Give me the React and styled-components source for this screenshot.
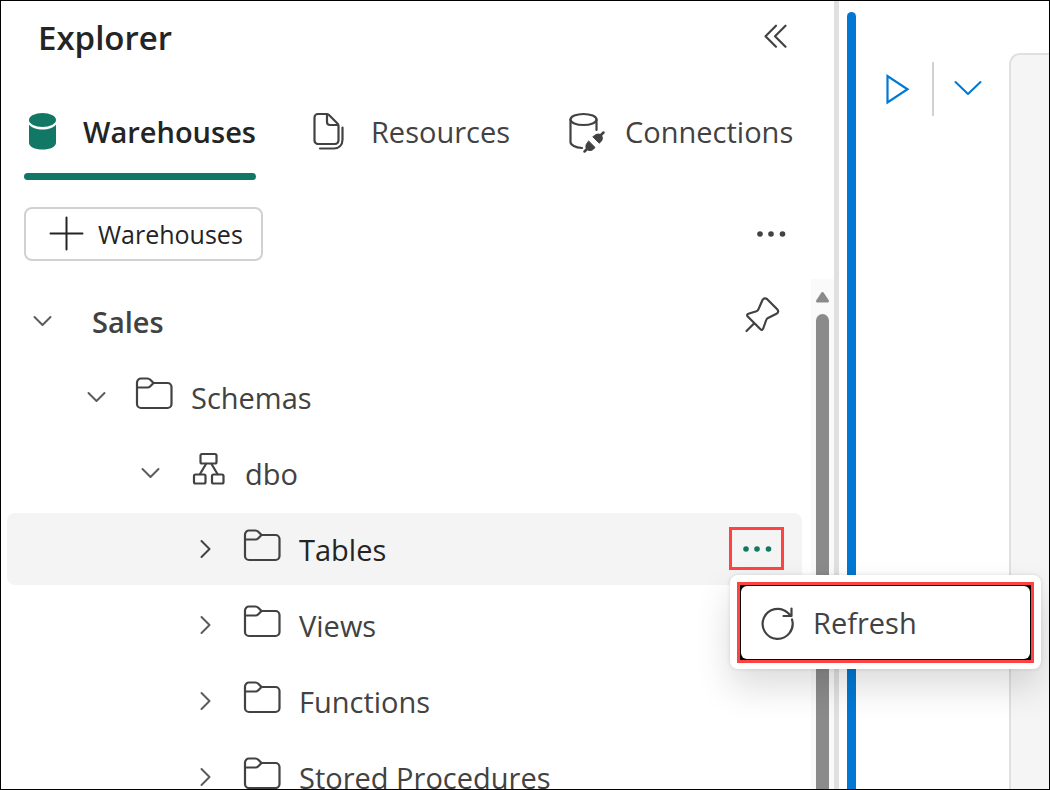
import React from "react";
import styled, { createGlobalStyle, css } from "styled-components";

const color = {
  text: "#242424",
  muted: "#424242",
  green: "#117865",
  blue: "#0078d4",
  line: "#e0e0e0",
  callout: "#ff4343",
};

const GlobalStyle = createGlobalStyle`
  * { box-sizing: border-box; }
  body {
    margin: 0;
    background: #fff;
    color: ${color.muted};
    font-family: "Open Sans", "Noto Sans", sans-serif;
    font-size: 29px;
    line-height: 40px;
  }
  button {
    margin: 0;
    padding: 0;
    border: 0;
    background: none;
    color: inherit;
    font: inherit;
    cursor: pointer;
  }
  svg { display: block; flex: none; overflow: visible; }
`;

const Frame = styled.div`
  display: flex;
  height: 100vh;
  overflow: hidden;
  border: 1px solid #000;
`;

const Sidebar = styled.aside`
  display: flex;
  flex: 1;
  flex-direction: column;
  min-width: 0;
  border-right: 5px solid ${color.line};
`;

const Header = styled.header`
  display: flex;
  align-items: center;
  justify-content: space-between;
  height: 74px;
  padding: 0 38px 0 37px;
`;

const Title = styled.h1`
  margin: 0;
  color: ${color.text};
  font-size: 33px;
  font-weight: 600;
  line-height: 44px;
`;

const IconButton = styled.button`
  display: grid;
  place-items: center;
  width: 40px;
  height: 40px;
`;

const Tabs = styled.div`
  display: flex;
  gap: 56px;
  height: 105px;
  padding-left: 23px;
`;

const Tab = styled.button`
  position: relative;
  display: flex;
  align-items: center;
  gap: 21px;
  padding: 8px 0 0;
  white-space: nowrap;
  ${({ $active }) =>
    $active &&
    css`
      color: ${color.text};
      font-weight: 600;
      &::after {
        content: "";
        position: absolute;
        inset: auto 0 0;
        height: 7px;
        border-radius: 4px;
        background: ${color.green};
      }
    `}
`;

const Toolbar = styled.div`
  display: flex;
  align-items: center;
  justify-content: space-between;
  padding: 27px 43px 18px 23px;
`;

const AddButton = styled.button`
  display: flex;
  align-items: center;
  gap: 14px;
  height: 54px;
  padding: 0 18px 0 24px;
  border: 2px solid #d1d1d1;
  border-radius: 8px;
  color: ${color.text};
  font-size: 25px;
  line-height: 36px;
`;

const Explorer = styled.div`
  display: flex;
  flex: 1;
  min-height: 0;
`;

const Tree = styled.ul`
  display: flex;
  flex: 1;
  flex-direction: column;
  gap: 4px;
  margin: 0;
  padding: 6px 9px 0 6px;
  list-style: none;
`;

const Row = styled.li`
  display: flex;
  flex: none;
  align-items: center;
  height: 72px;
  padding-right: 18px;
  padding-left: ${({ $level }) => 8 + $level * 54}px;
  border-radius: 8px;
  background: ${({ $selected }) => ($selected ? "#f4f4f4" : "transparent")};
`;

const Toggle = styled.button`
  display: grid;
  place-items: center;
  width: 54px;
  height: 40px;
  color: ${({ $selected }) => ($selected ? color.muted : "#5c5c5c")};
`;

const NodeIcon = styled.span`
  margin: 0 17px 8px 11px;
`;

const Label = styled.span`
  flex: 1;
  padding-top: 2px;
  padding-left: ${({ $root }) => ($root ? "23px" : "0")};
  color: ${({ $selected }) => ($selected ? color.text : color.muted)};
  font-weight: ${({ $root }) => ($root ? 600 : 400)};
  white-space: nowrap;
`;

const Actions = styled.div`
  position: relative;
  margin-bottom: 1px;
`;

const MoreButton = styled(IconButton)`
  width: 55px;
  height: 43px;
  border: 3px solid ${color.callout};
  color: ${color.green};
`;

const Menu = styled.div`
  position: absolute;
  top: 48px;
  left: 1px;
  z-index: 10;
  width: 311px;
  padding: 7px 7px 6px;
  border-radius: 8px;
  background: #fff;
  box-shadow: 0 0 4px rgba(0, 0, 0, 0.12), 0 18px 36px rgba(0, 0, 0, 0.14);
`;

const Callout = styled.div`
  padding: 1px;
  border: 3px solid ${color.callout};
  background: #000;
`;

const MenuItem = styled.button`
  display: flex;
  align-items: center;
  gap: 19px;
  width: 100%;
  height: 73px;
  padding: 0 19px;
  border-radius: 6px;
  background: #fff;
  color: ${color.muted};
`;

const Scrollbar = styled.div`
  display: flex;
  flex-direction: column;
  align-items: center;
  gap: 11px;
  width: 23px;
  padding-top: 12px;
  background: #fafafa;
`;

const Thumb = styled.div`
  flex: 1;
  width: 13px;
  border-radius: 7px 7px 0 0;
  background: #8b8b8b;
`;

const Editor = styled.main`
  display: flex;
  flex: 0 0 210px;
  padding-left: 8px;
`;

const ActiveBar = styled.div`
  width: 9px;
  margin-top: 11px;
  border-radius: 5px 5px 0 0;
  background: ${color.blue};
`;

const CellTools = styled.div`
  display: flex;
  align-items: center;
  gap: 14px;
  height: 54px;
  margin: 61px 21px 0 22px;
  color: ${color.blue};
`;

const Separator = styled.div`
  width: 2px;
  height: 54px;
  background: #d1d1d1;
`;

const CodeCell = styled.section`
  flex: 1;
  margin-top: 52px;
  border: 2px solid ${color.line};
  border-width: 2px 0 0 2px;
  border-radius: 11px 0 0 0;
  background: #f5f5f5;
`;

function Icon({ w, h, stroke = 2.2, children }) {
  return (
    <svg
      width={w}
      height={h}
      viewBox={`0 0 ${w} ${h}`}
      fill="none"
      stroke="currentColor"
      strokeWidth={stroke}
      strokeLinecap="round"
      strokeLinejoin="round"
      aria-hidden="true"
    >
      {children}
    </svg>
  );
}

const CollapseIcon = () => (
  <Icon w={24} h={26}>
    <path d="M12 .700 1.500 11.200 12 21.700M21.500.700 11 11.200 21.500 21.700" />
  </Icon>
);

const WarehouseIcon = () => (
  <Icon w={38} h={40}>
    <g fill={color.green} stroke="none">
      <ellipse cx="18.500" cy="8" rx="13.500" ry="7" />
      <path d="M5 12.500C7.500 16 12.500 17.500 18.500 17.500s11-1.500 13.500-5V31c0 3.800-6 6.500-13.500 6.500S5 34.800 5 31Z" />
    </g>
  </Icon>
);

const ResourcesIcon = () => (
  <Icon w={38} h={40}>
    <path d="M6 2h8.500a3.500 3.500 0 0 1 2.500 1l8.500 8.500a3.500 3.500 0 0 1 1 2.500v14.500a3.500 3.500 0 0 1-3.500 3.500H6A3.500 3.500 0 0 1 2.500 28.500V5.500A3.500 3.500 0 0 1 6 2Z" />
    <path d="M15 2.500V10a3 3 0 0 0 3 3h7.500" />
    <path d="M30.500 15.500V27.500c0 5.500-3.500 9-8.500 9H8" />
  </Icon>
);

const ConnectionsIcon = () => (
  <Icon w={38} h={40}>
    <ellipse cx="17.500" cy="7.500" rx="13" ry="5.500" />
    <path d="M4.500 7.500V30c0 3 5 5.500 11.500 6M30.500 7.500V18" />
    <path d="m18.500 39.500 3-3M34.500 23.500l3-3" strokeWidth="2.500" />
    <g fill="currentColor" stroke="currentColor" strokeWidth="1">
      <path d="M22.800 29.200 29 35.400l-1.400 1.600c-2 2-5 2-6.600.400s-1.600-4.600.300-6.600Z" />
      <path d="m27 25 6.200 6.200 1.600-1.400c2-2 2-5 .400-6.600s-4.600-1.600-6.600.300Z" />
    </g>
  </Icon>
);

const PlusIcon = () => (
  <Icon w={34} h={38} stroke={2}>
    <path d="M16.500 2.500v32M.500 18.500h32" />
  </Icon>
);

const MoreIcon = () => (
  <Icon w={30} h={8}>
    <g fill="currentColor" stroke="none">
      <circle cx="4" cy="4" r="2.800" />
      <circle cx="15" cy="4" r="2.800" />
      <circle cx="26.500" cy="4" r="2.800" />
    </g>
  </Icon>
);

const ChevronIcon = ({ open }) => (
  <Icon w={20} h={20} stroke={2}>
    <path d={open ? "m2.500 6 8 8 8-8" : "m7.500 2 8 8-8 8"} />
  </Icon>
);

const FolderIcon = () => (
  <Icon w={40} h={34}>
    <path d="M3 12V6.500a4 4 0 0 1 4-4h6.500c1.200 0 2 .400 2.800 1.200L19.500 7h14a4 4 0 0 1 4 4v17a4 4 0 0 1-4 4H7a4 4 0 0 1-4-4Z" />
    <path d="M3 11.500h10.500c1.200 0 2-.400 2.800-1.200L19.500 7" />
  </Icon>
);

const SchemaIcon = () => (
  <Icon w={40} h={34}>
    <rect x="12.500" y="2" width="16" height="9.500" rx="1.500" />
    <rect x="6" y="22.500" width="11.500" height="9" rx="1.500" />
    <rect x="24" y="22.500" width="11.500" height="9" rx="1.500" />
    <path d="m18 12-6 10M23.500 12l6 10" />
  </Icon>
);

const PinIcon = () => (
  <Icon w={40} h={40}>
    <path d="M2.500 30 10 22.500M18.500-1c1-1.800 3-2.200 4.700-.800l10 10c1.500 1.600 1.300 3.600-.700 4.600l-8.500 4.200c-1 .500-1.500 1-1.800 2l-3 8.500c-.500 1.500-1.700 1.800-2.700.800L3.700 15.500c-1-1-.700-2.200.700-2.700l8-2.600c1-.400 1.600-.900 2-1.800Z" />
  </Icon>
);

const RefreshIcon = () => (
  <Icon w={34} h={38}>
    <path d="M32 15.500A15 15 0 1 1 28 9l3 3M31.500 4.500V12H23.500" />
  </Icon>
);

const RunIcon = () => (
  <Icon w={26} h={34}>
    <path d="M2.500 4v26.500l20-13.250Z" strokeLinejoin="miter" />
  </Icon>
);

const WideChevronIcon = () => (
  <Icon w={28} h={16} stroke={2}>
    <path d="m1.500 1 12.500 12 12.500-12" />
  </Icon>
);

const UpArrow = () => (
  <svg width="15" height="12" viewBox="0 0 15 12" aria-hidden="true">
    <path
      d="M7.500 2.500 12.500 10h-10Z"
      fill="#8b8b8b"
      stroke="#8b8b8b"
      strokeWidth="3"
      strokeLinejoin="round"
    />
  </svg>
);

const tabs = [
  { name: "Warehouses", icon: <WarehouseIcon />, active: true },
  { name: "Resources", icon: <ResourcesIcon /> },
  { name: "Connections", icon: <ConnectionsIcon /> },
];

const nodes = [
  { name: "Sales", level: 0, open: true, pinned: true },
  { name: "Schemas", level: 1, open: true, icon: <FolderIcon /> },
  { name: "dbo", level: 2, open: true, icon: <SchemaIcon /> },
  { name: "Tables", level: 3, icon: <FolderIcon />, selected: true },
  { name: "Views", level: 3, icon: <FolderIcon /> },
  { name: "Functions", level: 3, icon: <FolderIcon /> },
  { name: "Stored Procedures", level: 3, icon: <FolderIcon /> },
];

function TreeRow({ node }) {
  return (
    <Row $level={node.level} $selected={node.selected}>
      <Toggle
        aria-label={`Toggle ${node.name}`}
        aria-expanded={!!node.open}
        $selected={node.selected}
      >
        <ChevronIcon open={node.open} />
      </Toggle>
      {node.icon && <NodeIcon>{node.icon}</NodeIcon>}
      <Label $root={node.level === 0} $selected={node.selected}>
        {node.name}
      </Label>
      {node.pinned && (
        <IconButton aria-label="Pin">
          <PinIcon />
        </IconButton>
      )}
      {node.selected && (
        <Actions>
          <MoreButton aria-label="More options" aria-haspopup="menu" aria-expanded="true">
            <MoreIcon />
          </MoreButton>
          <Menu role="menu">
            <Callout>
              <MenuItem role="menuitem">
                <RefreshIcon />
                Refresh
              </MenuItem>
            </Callout>
          </Menu>
        </Actions>
      )}
    </Row>
  );
}

export default function App() {
  return (
    <>
      <GlobalStyle />
      <Frame>
        <Sidebar>
          <Header>
            <Title>Explorer</Title>
            <IconButton aria-label="Collapse explorer">
              <CollapseIcon />
            </IconButton>
          </Header>
          <Tabs role="tablist">
            {tabs.map((tab) => (
              <Tab key={tab.name} role="tab" aria-selected={!!tab.active} $active={tab.active}>
                {tab.icon}
                {tab.name}
              </Tab>
            ))}
          </Tabs>
          <Toolbar>
            <AddButton>
              <PlusIcon />
              Warehouses
            </AddButton>
            <IconButton aria-label="More options">
              <MoreIcon />
            </IconButton>
          </Toolbar>
          <Explorer>
            <Tree>
              {nodes.map((node) => (
                <TreeRow key={node.name} node={node} />
              ))}
            </Tree>
            <Scrollbar>
              <UpArrow />
              <Thumb />
            </Scrollbar>
          </Explorer>
        </Sidebar>
        <Editor>
          <ActiveBar />
          <CellTools>
            <IconButton aria-label="Run">
              <RunIcon />
            </IconButton>
            <Separator />
            <IconButton aria-label="Run options">
              <WideChevronIcon />
            </IconButton>
          </CellTools>
          <CodeCell aria-label="Code cell" />
        </Editor>
      </Frame>
    </>
  );
}
